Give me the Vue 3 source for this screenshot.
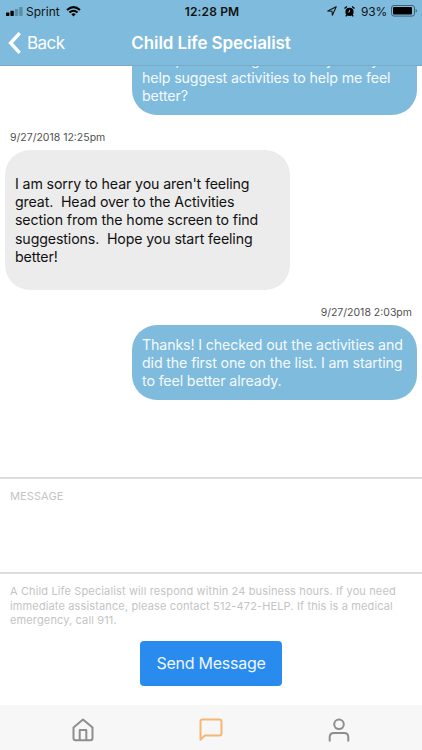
<template>
  <div class="screen">
    <header class="header">
      <div class="status">
        <div class="status-left">
          <svg class="signal" width="17" height="9" viewBox="0 0 17 9">
            <rect x="0" y="5.5" width="3.4" height="3.5" rx=".7" />
            <rect x="4.4" y="3.8" width="3.4" height="5.2" rx=".7" />
            <rect class="dim" x="8.8" y="2" width="3.4" height="7" rx=".7" />
            <rect class="dim" x="13.2" y="0" width="3.4" height="9" rx=".7" />
          </svg>
          <span class="carrier">Sprint</span>
          <svg class="wifi" width="15" height="11" viewBox="0 0 15 11" fill="none" stroke="#000">
            <path d="M1 4Q7.500 -1.800 14 4" stroke-width="2" />
            <path d="M3.400 6.500Q7.500 2.900 11.600 6.500" stroke-width="1.900" />
            <path d="M7.500 10.600L5.300 8.300Q7.500 6.400 9.700 8.300Z" fill="#000" stroke="none" />
          </svg>
        </div>
        <span class="clock">12:28 PM</span>
        <div class="status-right">
          <svg class="location" width="10" height="10" viewBox="0 0 10 10" fill="none" stroke="#111" stroke-width="1.100" stroke-linejoin="round">
            <path d="M.8 5L9.200 .8L5.400 9.200L5 5.200Z" />
          </svg>
          <svg class="alarm" width="11" height="11" viewBox="0 0 11 11">
            <circle cx="5.500" cy="5.900" r="4.100" />
            <path d="M.5 2.600L2.900 .5M10.500 2.600L8.100 .5M2.800 9L1.800 10.400M8.200 9L9.200 10.400" stroke="#000" stroke-width="1.300" />
            <path d="M5.500 3.800V6H3.800" fill="none" stroke="#7fbbdc" stroke-width=".8" />
          </svg>
          <span class="percent">93%</span>
          <svg class="battery" width="27" height="12" viewBox="0 0 27 12">
            <rect x=".5" y=".5" width="23" height="10.600" rx="2.500" fill="none" stroke="#426273" />
            <rect x="2" y="2" width="19" height="7.600" rx="1" />
            <path d="M24.700 4Q26 4.500 26 5.800T24.700 7.600Z" fill="#426273" />
          </svg>
        </div>
      </div>
      <div class="nav">
        <div class="back">
          <svg width="13" height="22" viewBox="0 0 13 22" fill="none" stroke="#fff" stroke-width="3.400">
            <path d="M11.700 1.200L2.600 11L11.700 20.800" />
          </svg>
          <span class="back-label">Back</span>
        </div>
        <h1>Child Life Specialist</h1>
      </div>
    </header>

    <main class="messages">
      <div
        v-for="(message, i) in messages"
        :key="i"
        class="message"
        :class="message.from"
      >
        <time v-if="message.date">{{ message.date }}</time>
        <div class="bubble">{{ message.text }}</div>
      </div>
    </main>

    <section class="compose">
      <textarea placeholder="MESSAGE"></textarea>
      <p class="notice">{{ notice }}</p>
      <button>Send Message</button>
    </section>

    <footer class="tabs">
      <div class="tab">
        <svg width="22" height="24" viewBox="0 0 22 24">
          <path d="M1.500 9.500L11 1.500L20.500 9.500V20.200Q20.500 22.200 18.500 22.200H3.500Q1.500 22.200 1.500 20.200Z" />
          <path d="M7.700 22V12H14.300V22" />
        </svg>
      </div>
      <div class="tab active">
        <svg width="24" height="24" viewBox="0 0 24 24">
          <path d="M1.500 21.800V3.500Q1.500 1.500 3.500 1.500H20.500Q22.500 1.500 22.500 3.500V15.500Q22.500 17.500 20.500 17.500H5.800Z" />
        </svg>
      </div>
      <div class="tab">
        <svg width="22" height="24" viewBox="0 0 22 24">
          <circle cx="11" cy="6.300" r="4.800" />
          <path d="M1.700 22.800V19.300Q1.700 15 6 15H16Q20.300 15 20.300 19.300V22.800" />
        </svg>
      </div>
    </footer>
  </div>
</template>

<script setup>
/**
 * messages
 */
const messages = [
  {
    from: 'me',
    date: '',
    text: 'Hello, I am feeling tired today. Can you\nhelp suggest activities to help me feel\nbetter?'
  },
  {
    from: 'specialist',
    date: '9/27/2018 12:25pm',
    text: "I am sorry to hear you aren't feeling\ngreat.  Head over to the Activities\nsection from the home screen to find\nsuggestions.  Hope you start feeling\nbetter!"
  },
  {
    from: 'me',
    date: '9/27/2018 2:03pm',
    text: 'Thanks! I checked out the activities and\ndid the first one on the list. I am starting\nto feel better already.'
  }
]

/**
 * notice under the message box
 */
const notice = 'A Child Life Specialist will respond within 24 business hours. If you need\nimmediate assistance, please contact 512-472-HELP. If this is a medical\nemergency, call 911.'
</script>

<style>
body {
  margin: 0;
}
</style>

<style scoped>
.screen {
  display: flex;
  flex-direction: column;
  width: 422px;
  height: 750px;
  overflow: hidden;
  background: #fff;
  font-family: Inter, "Liberation Sans", sans-serif;
}

.header {
  flex: none;
  box-sizing: border-box;
  height: 66px;
  background: #7fbbdc;
  border-bottom: 1px solid #79aac6;
}

.status {
  display: grid;
  grid-template-columns: 1fr auto 1fr;
  align-items: center;
  height: 22px;
  padding: 0 4px 0 6px;
  font-size: 12px;
  color: #111;
}

.status-left,
.status-right {
  display: flex;
  align-items: center;
}

.status-right {
  justify-content: flex-end;
}

.dim {
  fill: #5d8ca6;
}

.signal {
  margin-top: 1px;
}

.carrier {
  margin: 0 6px 0 3px;
  letter-spacing: 0;
}

.clock {
  font-weight: 600;
  letter-spacing: 0.15px;
}

.alarm {
  margin: 0 6px 0 7px;
}

.percent {
  margin-right: 4px;
  letter-spacing: -0.2px;
}

.nav {
  display: grid;
  grid-template-columns: 1fr auto 1fr;
  align-items: center;
  height: 42px;
  padding: 0 8px;
  color: #fff;
}

.back {
  display: flex;
  align-items: center;
}

.back-label {
  margin-left: 6px;
  font-size: 17px;
  letter-spacing: -0.55px;
}

h1 {
  margin: 0;
  font-size: 17px;
  font-weight: 600;
  letter-spacing: -0.1px;
}

.messages {
  flex: none;
  display: flex;
  flex-direction: column;
  justify-content: flex-end;
  box-sizing: border-box;
  height: 411px;
  padding: 0 5px 77px;
  overflow: hidden;
}

.message {
  display: flex;
  flex-direction: column;
  flex: none;
  align-items: flex-start;
}

.message.me {
  align-items: flex-end;
}

time {
  padding: 16px 5px 5px;
  font-size: 10.500px;
  line-height: 14px;
  color: #505050;
}

.bubble {
  box-sizing: border-box;
  width: 285px;
  padding: 11px 10px 9.500px;
  border-radius: 25px;
  background: #7fbbdc;
  color: #f4faff;
  font-size: 14.200px;
  letter-spacing: -0.12px;
  line-height: 18.300px;
  white-space: pre;
}

.message:first-child .bubble {
  padding: 11.500px 10px 9px;
}

.specialist .bubble {
  padding: 25.300px 10px 23.300px;
  background: #ececec;
  color: #111;
}

.compose {
  flex: 1;
  display: flex;
  flex-direction: column;
  align-items: center;
}

textarea {
  box-sizing: border-box;
  width: 100%;
  height: 97px;
  margin: 0;
  padding: 10px 10px;
  border: 0;
  border-top: 2px solid #dcdcdc;
  border-bottom: 2px solid #dcdcdc;
  border-radius: 0;
  outline: 0;
  resize: none;
  background: #fff;
  font-family: inherit;
  font-size: 11px;
  letter-spacing: 0.1px;
  line-height: 14px;
}

textarea::placeholder {
  color: #c4c4c4;
}

.notice {
  align-self: stretch;
  margin: 10.400px 10px 13.600px;
  font-size: 11px;
  letter-spacing: 0.135px;
  line-height: 14.200px;
  white-space: pre;
  color: #c4c4c4;
}

button {
  width: 142px;
  height: 45px;
  padding: 0;
  border: 0;
  border-radius: 4px;
  background: #298bee;
  color: #eff7ff;
  font-family: inherit;
  font-size: 16px;
  letter-spacing: -0.25px;
}

.tabs {
  flex: none;
  display: grid;
  grid-template-columns: repeat(3, 128px);
  justify-content: center;
  height: 45px;
  background: #f7f7f7;
}

.tab {
  display: flex;
  justify-content: center;
  padding-top: 12.500px;
}

.tab svg {
  fill: none;
  stroke: #8e8e90;
  stroke-width: 2;
  stroke-linejoin: round;
  stroke-linecap: round;
}

.tab.active svg {
  stroke: #f5b874;
}
</style>
